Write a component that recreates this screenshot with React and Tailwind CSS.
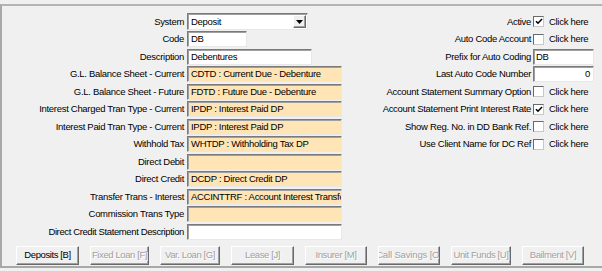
import React from 'react';

const sunken =
  'border border-t-[#7a7a7a] border-l-[#7a7a7a] border-r-[#e8e8e8] border-b-[#e8e8e8] shadow-[inset_1px_1px_0_#a0a0a0]';

const raised =
  'border border-t-white border-l-white border-r-[#696969] border-b-[#696969] shadow-[inset_-1px_-1px_0_#a0a0a0]';

const leftRows = [
  { label: 'System', kind: 'select', value: 'Deposit' },
  { label: 'Code', kind: 'white', value: 'DB', w: 'w-[60px]' },
  { label: 'Description', kind: 'white', value: 'Debentures', w: 'w-[125px]' },
  { label: 'G.L. Balance Sheet - Current', kind: 'code', value: 'CDTD : Current Due - Debenture' },
  { label: 'G.L. Balance Sheet - Future', kind: 'code', value: 'FDTD : Future Due - Debenture' },
  { label: 'Interest Charged Tran Type - Current', kind: 'code', value: 'IPDP : Interest Paid DP' },
  { label: 'Interest Paid Tran Type - Current', kind: 'code', value: 'IPDP : Interest Paid DP' },
  { label: 'Withhold Tax', kind: 'code', value: 'WHTDP : Withholding Tax DP' },
  { label: 'Direct Debit', kind: 'code', value: '' },
  { label: 'Direct Credit', kind: 'code', value: 'DCDP : Direct Credit DP' },
  { label: 'Transfer Trans - Interest', kind: 'code', value: 'ACCINTTRF : Account Interest Transfer' },
  { label: 'Commission Trans Type', kind: 'code', value: '' },
  { label: 'Direct Credit Statement Description', kind: 'white', value: '', w: 'w-[155px]', tight: true },
];

const rightRows = [
  { label: 'Active', kind: 'check', checked: true },
  { label: 'Auto Code Account', kind: 'check', checked: false },
  { label: 'Prefix for Auto Coding', kind: 'text', value: 'DB' },
  { label: 'Last Auto Code Number', kind: 'number', value: '0' },
  { label: 'Account Statement Summary Option', kind: 'check', checked: false },
  { label: 'Account Statement Print Interest Rate', kind: 'check', checked: true },
  { label: 'Show Reg. No. in DD Bank Ref.', kind: 'check', checked: false },
  { label: 'Use Client Name for DC Ref', kind: 'check', checked: false },
];

const buttons = [
  { label: 'Deposits [B]', w: 'w-[63px]', enabled: true },
  { label: 'Fixed Loan [F]', w: 'w-[59px]' },
  { label: 'Var. Loan [G]', w: 'w-[60px]' },
  { label: 'Lease [J]', w: 'w-[63px]' },
  { label: 'Insurer [M]', w: 'w-[62px]' },
  { label: 'Call Savings [O]', w: 'w-[62px]', extra: 'text-[9.5px] tracking-[-0.15px]' },
  { label: 'Unit Funds [U]', w: 'w-[60px]' },
  { label: 'Bailment [V]', w: 'w-[62px]' },
];

const Field = ({ row }) => {
  if (row.kind === 'select') {
    return (
      <div className={`${sunken} bg-white w-[121px] h-[17px] flex items-center pl-[3px] pr-[1px]`}>
        <span className="flex-1">{row.value}</span>
        <div className={`${raised} bg-[#f0f0f0] w-[13px] h-[13px] flex items-center justify-center`}>
          <svg width="7" height="4" viewBox="0 0 7 4">
            <path d="M0 0h7L3.5 4z" fill="#000" />
          </svg>
        </div>
      </div>
    );
  }
  if (row.kind === 'code') {
    return (
      <div className={`${sunken} bg-[#ffe4b5] w-[155px] h-[16px] flex items-center pl-[3px] overflow-hidden whitespace-nowrap`}>
        {row.value}
      </div>
    );
  }
  return (
    <div className={`${sunken} bg-white ${row.w} h-[16px] flex items-center pl-[3px] overflow-hidden whitespace-nowrap`}>
      {row.value}
    </div>
  );
};

const Check = ({ checked }) => (
  <div className="w-[11px] h-[11px] bg-white border border-t-[#696969] border-l-[#696969] border-r-[#c8c8c8] border-b-[#c8c8c8] flex items-center justify-center">
    {checked && (
      <svg width="8" height="7" viewBox="0 0 8 7">
        <path d="M1 3.2l2 2 4-4.2" stroke="#000" strokeWidth="1.6" fill="none" />
      </svg>
    )}
  </div>
);

const App = () => {
  return (
    <div
      className="w-[602px] h-[271px] bg-[#f0f0f0] pt-[4px] text-[9.5px] tracking-[-0.3px] text-black overflow-hidden"
      style={{ fontFamily: '"Liberation Sans", Arial, sans-serif' }}
    >
      <div className="h-[264px] border-t-2 border-l-2 border-b-2 border-t-[#b4b4b4] border-l-[#a8a8a8] border-b-[#a8a8a8] flex flex-col pt-[7px]">
        <div className="flex">
          {/* left side */}
          <div className="w-[345px] flex flex-col">
            {leftRows.map((row) => (
              <div key={row.label} className="flex items-center h-[17.5px]">
                <div className={`w-[185px] text-right pr-[3px] whitespace-nowrap ${row.tight ? 'tracking-[-0.38px]' : ''}`}>
                  {row.label}
                </div>
                <Field row={row} />
              </div>
            ))}
          </div>

          {/* right side */}
          <div className="flex-1 flex flex-col">
            {rightRows.map((row) => (
              <div key={row.label} className="flex items-center h-[17.5px]">
                <div className="w-[185px] text-right pr-[1px] whitespace-nowrap">{row.label}</div>
                {row.kind === 'check' && (
                  <div className="flex items-center ml-[1px]">
                    <Check checked={row.checked} />
                    <span className="ml-[5px]">Click here</span>
                  </div>
                )}
                {row.kind === 'text' && (
                  <div className={`${sunken} bg-white w-[61px] h-[16px] ml-[1px] flex items-center pl-[2px]`}>
                    {row.value}
                  </div>
                )}
                {row.kind === 'number' && (
                  <div className={`${sunken} bg-white w-[61px] h-[16px] ml-[1px] flex items-center justify-end pr-[3px]`}>
                    {row.value}
                  </div>
                )}
              </div>
            ))}
          </div>
        </div>

        {/* bottom buttons */}
        <div className="flex gap-[11px] pl-[14px] mt-[5px]">
          {buttons.map((b) => (
            <div
              key={b.label}
              className={`${raised} ${b.w} h-[19px] flex items-center justify-center whitespace-nowrap overflow-hidden ${
                b.extra || 'text-[9.5px] tracking-[-0.4px]'
              } ${b.enabled ? 'text-black' : 'text-[#a0a0a0] [text-shadow:1px_1px_0_#fff]'}`}
            >
              {b.label}
            </div>
          ))}
        </div>
      </div>
    </div>
  );
};

export default App;
